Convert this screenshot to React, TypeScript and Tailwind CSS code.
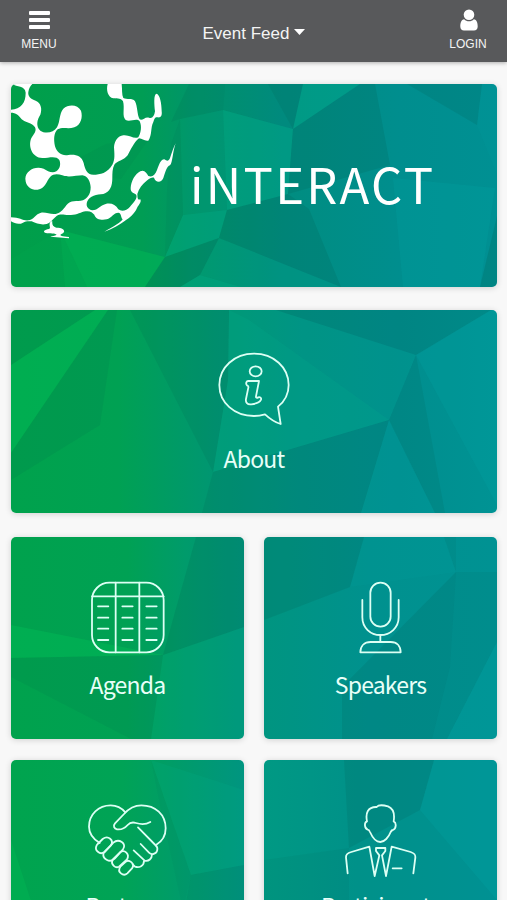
import React from "react";
import clsx from "clsx";

type Facet = {
  points: string;
  fill: string;
  opacity: number;
};

type Stop = [offset: string, color: string];

type Backdrop = {
  id: string;
  width: number;
  height: number;
  stops: Stop[];
  facets: Facet[];
};

type Tile = {
  label: string;
  icon: React.ReactNode;
  backdrop: Backdrop;
  labelClass?: string;
};

const DARK = "#00584c";
const TEAL = "#00a3a3";
const GREEN = "#00b956";
const MINT = "#00b48c";

const heroBackdrop: Backdrop = {
  id: "hero",
  width: 486,
  height: 203,
  stops: [
    ["0%", "#009f49"],
    ["27%", "#009d54"],
    ["37%", "#009569"],
    ["56%", "#008d80"],
    ["80%", "#008e8e"],
    ["100%", "#009093"],
  ],
  facets: [
    {points: "49,146 154,173 134,203 76,203", fill: GREEN, opacity: 0.5},
    {points: "49,146 76,203 54,203", fill: GREEN, opacity: 0.3},
    {points: "0,203 0,175 49,146 54,203", fill: GREEN, opacity: 0.12},
    {points: "66,75 95,60 140,52 110,95 80,92", fill: DARK, opacity: 0.06},
    {points: "156,106 160,60 169,35 172,131 154,173", fill: DARK, opacity: 0.07},
    {points: "178,0 214,0 212,26 169,35 160,38", fill: DARK, opacity: 0.12},
    {points: "214,0 257,0 282,45 212,26", fill: DARK, opacity: 0.04},
    {points: "257,0 292,0 282,45", fill: DARK, opacity: 0.18},
    {points: "292,0 349,0 282,45", fill: MINT, opacity: 0.35},
    {points: "212,26 282,45 277,110 216,126", fill: MINT, opacity: 0.33},
    {points: "169,35 212,26 216,126 172,131", fill: MINT, opacity: 0.1},
    {points: "172,131 216,126 208,154 154,173", fill: MINT, opacity: 0.32},
    {points: "154,173 208,154 189,191 169,203 134,203", fill: DARK, opacity: 0.16},
    {points: "189,191 169,203 230,203", fill: MINT, opacity: 0.35},
    {points: "208,154 330,203 230,203 189,191", fill: MINT, opacity: 0.15},
    {points: "216,126 277,110 298,125 330,203 208,154", fill: DARK, opacity: 0.16},
    {points: "282,45 349,0 364,0 379,81 277,110", fill: DARK, opacity: 0.17},
    {points: "396,0 471,0 466,41", fill: DARK, opacity: 0.15},
    {points: "471,0 486,0 486,90 466,41", fill: TEAL, opacity: 0.15},
    {points: "382,94 484,104 469,203 392,203", fill: TEAL, opacity: 0.28},
    {points: "486,132 486,203 469,203", fill: DARK, opacity: 0.2},
  ],
};

const aboutBackdrop: Backdrop = {
  id: "about",
  width: 486,
  height: 203,
  stops: [
    ["0%", "#00a24c"],
    ["22%", "#00a153"],
    ["42%", "#009672"],
    ["60%", "#009084"],
    ["80%", "#008e8e"],
    ["100%", "#009394"],
  ],
  facets: [
    {points: "0,0 84,0 0,55", fill: DARK, opacity: 0.09},
    {points: "84,0 97,0 0,143 0,55", fill: GREEN, opacity: 0.5},
    {points: "97,0 106,0 89,115 0,170 0,143", fill: DARK, opacity: 0.1},
    {points: "119,0 218,0 217,70 202,162", fill: DARK, opacity: 0.12},
    {points: "218,0 265,0 405,45 378,110 202,162 217,70", fill: MINT, opacity: 0.12},
    {points: "218,0 238,10 378,110 202,162 217,70", fill: MINT, opacity: 0.17},
    {points: "202,162 378,110 350,203 191,203", fill: DARK, opacity: 0.13},
    {points: "378,110 350,203 424,203", fill: TEAL, opacity: 0.22},
    {points: "378,110 405,45 434,203 424,203", fill: DARK, opacity: 0.12},
    {points: "265,0 480,0 405,45", fill: DARK, opacity: 0.15},
    {points: "480,0 486,0 486,195 405,45", fill: TEAL, opacity: 0.25},
  ],
};

const agendaBackdrop: Backdrop = {
  id: "agenda",
  width: 233,
  height: 202,
  stops: [
    ["0%", "#00a24d"],
    ["50%", "#00a154"],
    ["75%", "#009b6b"],
    ["100%", "#00947b"],
  ],
  facets: [
    {points: "0,88 152,118 0,121", fill: GREEN, opacity: 0.5},
    {points: "0,121 152,118 140,202 120,202 0,140", fill: DARK, opacity: 0.09},
    {points: "185,0 233,0 233,90 152,118", fill: DARK, opacity: 0.16},
    {points: "233,90 233,202 140,202 152,118", fill: MINT, opacity: 0.15},
  ],
};

const speakersBackdrop: Backdrop = {
  id: "speakers",
  width: 233,
  height: 202,
  stops: [
    ["0%", "#009580"],
    ["45%", "#00918e"],
    ["100%", "#009293"],
  ],
  facets: [
    {points: "0,0 100,0 86,50 0,83", fill: DARK, opacity: 0.17},
    {points: "100,0 180,0 192,35 86,50", fill: TEAL, opacity: 0.12},
    {points: "180,0 192,0 192,35", fill: DARK, opacity: 0.08},
    {points: "192,35 78,150 78,202 168,202 186,130", fill: DARK, opacity: 0.14},
    {points: "192,35 233,35 233,105 183,202 168,202 186,130", fill: DARK, opacity: 0.08},
    {points: "233,105 233,202 183,202", fill: TEAL, opacity: 0.28},
  ],
};

const partnersBackdrop: Backdrop = {
  id: "partners",
  width: 233,
  height: 202,
  stops: [
    ["0%", "#00a44e"],
    ["48%", "#00a356"],
    ["75%", "#009b6c"],
    ["100%", "#009580"],
  ],
  facets: [
    {points: "0,80 40,202 0,202", fill: GREEN, opacity: 0.4},
    {points: "140,0 233,30 233,105 180,115", fill: MINT, opacity: 0.18},
    {points: "140,0 180,115 172,150 150,50", fill: DARK, opacity: 0.04},
    {points: "180,115 233,105 233,202 172,160", fill: DARK, opacity: 0.09},
  ],
};

const participantsBackdrop: Backdrop = {
  id: "participants",
  width: 233,
  height: 202,
  stops: [
    ["0%", "#009983"],
    ["40%", "#009189"],
    ["100%", "#009193"],
  ],
  facets: [
    {points: "80,0 170,0 156,50 85,88", fill: DARK, opacity: 0.14},
    {points: "0,100 85,88 85,202 0,202", fill: DARK, opacity: 0.07},
    {points: "170,0 233,0 233,140 156,50", fill: TEAL, opacity: 0.3},
  ],
};

const FacetedBackdrop = ({id, width, height, stops, facets}: Backdrop) => (
  <svg
    className="absolute inset-0 h-full w-full"
    viewBox={`0 0 ${width} ${height}`}
    preserveAspectRatio="none"
    aria-hidden="true"
  >
    <defs>
      <linearGradient id={`${id}-base`} x1="0" y1="0" x2="1" y2="0">
        {stops.map(([offset, color]) => (
          <stop key={offset} offset={offset} stopColor={color} />
        ))}
      </linearGradient>
    </defs>
    <rect width={width} height={height} fill={`url(#${id}-base)`} />
    {facets.map((facet) => (
      <polygon
        key={facet.points}
        points={facet.points}
        fill={facet.fill}
        opacity={facet.opacity}
      />
    ))}
  </svg>
);

const GlobeMark = () => (
  <svg
    className="absolute left-0 top-0 h-[160px] w-[170px] fill-white"
    viewBox="18 18 510 480"
    aria-hidden="true"
  >
    <path d="M22 18C35 28 60 22 62 44C62 75 48 92 18 95L18 104C32 104 42 112 50 124C60 134 82 134 90 148C96 160 86 168 78 182C70 205 80 238 112 240C132 240 154 232 163 246C168 258 165 272 154 280C140 288 128 278 116 272C90 262 62 278 61 302C62 328 80 336 98 335C120 332 124 310 136 296C146 286 160 288 172 292C190 300 215 292 232 292C248 294 256 310 257 328C257 350 246 362 234 367C215 372 197 364 184 382C172 398 165 406 152 408C135 410 125 402 108 404C92 408 86 424 72 427C55 430 45 418 18 418L18 430C30 438 44 440 54 434C62 429 70 430 80 430C95 436 108 442 125 438C140 434 148 416 160 411C172 407 180 412 195 411C215 412 228 402 242 400C256 398 262 404 268 410C272 424 290 428 305 424C320 420 326 404 340 404C350 406 346 416 353 424C350 432 325 446 298 461C325 452 345 440 358 430C375 418 388 408 396 390C402 379 410 372 406 364C396 368 398 355 397 348C402 330 412 318 425 308C435 300 442 297 447 299C452 316 470 314 475 300C482 280 485 265 495 262C503 255 503 220 512 196C505 210 500 225 495 240C490 252 485 248 478 244C466 244 462 262 456 276C450 292 442 298 430 294C424 284 418 274 406 280C390 288 378 310 377 330C376 345 390 345 394 351C398 362 385 374 375 386C365 398 350 402 340 394C332 380 318 374 302 378C285 382 280 396 262 397C250 394 242 386 246 372C254 352 275 350 295 348C315 342 322 325 322 300C322 285 322 272 328 260C337 248 355 248 368 232C378 215 385 195 402 181C412 182 418 190 430 188C442 170 436 150 445 132C450 117 452 118 458 118C466 120 472 115 470 100C470 78 465 50 455 47C445 48 448 80 450 100C448 115 442 122 432 119C420 115 412 130 404 124C396 110 398 85 390 70C382 58 365 66 355 60C350 50 352 35 350 18L308 18C303 35 308 58 325 61C340 62 348 60 354 70C360 90 350 115 362 126C375 134 394 118 404 130C411 145 408 165 400 178C385 184 375 170 355 172C338 174 328 190 327 208C328 225 331 245 322 260C308 285 285 290 265 290C245 290 240 272 236 255C230 232 210 228 190 231C170 234 156 225 150 205C146 185 146 165 158 154C172 146 190 154 208 148C228 140 234 118 228 98C218 78 190 78 175 92C162 108 166 130 156 148C146 165 120 168 106 158C92 145 96 125 106 110C112 92 108 75 92 68C78 64 68 55 70 42C72 30 76 24 82 18Z" />
    <path d="M138 430C128 440 140 450 132 453C118 455 112 461 122 465C135 468 150 465 155 470C150 474 140 474 136 476L192 481L192 477C172 476 162 473 168 469C182 464 180 453 165 450C150 450 140 446 142 430Z" />
  </svg>
);

const LineIcon = ({
  viewBox,
  children,
}: {
  viewBox: string;
  children: React.ReactNode;
}) => (
  <svg
    className="h-[74px] w-[80px] fill-none stroke-[#dcfff4] stroke-[5.4]"
    viewBox={viewBox}
    strokeLinecap="round"
    strokeLinejoin="round"
    aria-hidden="true"
  >
    {children}
  </svg>
);

const AboutIcon = () => (
  <LineIcon viewBox="-108 156 240 222">
    <path d="M84 320C104 304 116 281 116 255C116 202 71 161 12 161S-92 202-92 255S-47 348 12 348C24 348 35 346 45 343C58 355 72 366 92 372Z" />
    <ellipse cx="17" cy="214" rx="18" ry="15" />
    <path d="M-6 243H27L18 289C17 294 21 294 25 292C30 290 35 294 33 299C29 308 14 312 4 313C-8 315-14 307-12 297L-5 263C-4 259-6 257-9 256C-13 252-12 244-6 243Z" />
  </LineIcon>
);

const AgendaIcon = () => (
  <LineIcon viewBox="264 153 240 222">
    <rect x="276" y="158" width="215" height="209" rx="52" />
    <path d="M276 199H491M347 158V367M418 158V367" />
    {[229, 263, 296, 330].map((y) => (
      <path key={y} d={`M294 ${y}H325M367 ${y}H398M439 ${y}H470`} />
    ))}
  </LineIcon>
);

const SpeakersIcon = () => (
  <LineIcon viewBox="261 153 240 222">
    <rect x="349" y="158" width="61" height="132" rx="30.5" />
    <path d="M325 210V262C325 293 349 315 379 315S434 293 434 262V210M379 315V336" />
    <path d="M319 367C319 348 331 336 350 336H410C429 336 440 348 440 367Z" />
  </LineIcon>
);

const PartnersIcon = () => (
  <LineIcon viewBox="264 162 240 222">
    <path d="M299 279C277 265 267 248 267 230C267 193 296 166 332 166C350 166 366 175 376 187" />
    <path d="M468 285C489 273 497 258 497 235C497 193 466 166 424 166C402 166 386 176 372 192L345 220C338 228 343 236 351 238C365 240 376 233 383 225C390 217 398 216 408 219C424 224 439 223 451 216" />
    <path d="M414 232L466 285C477 294 472 310 460 312C454 314 450 311 447 308L422 282" />
    <path d="M456 313C456 326 446 335 434 332L401 301M432 333C432 347 418 355 405 350L398 343" />
    <path d="M293 282L308 267C324 255 344 270 332 287L313 306C300 316 282 301 290 286Z" />
    <path d="M313 307L340 278C356 264 382 280 369 298L344 326C329 341 305 325 311 309" />
    <path d="M337 330L360 307C374 297 390 312 381 328L357 350C347 356 332 344 337 330Z" />
    <path d="M361 350L376 336C386 326 407 341 396 355L382 370C370 381 350 366 361 350Z" />
  </LineIcon>
);

const ParticipantsIcon = () => (
  <LineIcon viewBox="261 162 240 222">
    <path d="M339 214C334 190 341 170 368 171C374 163 391 166 402 169C420 176 422 195 419 214C428 218 427 236 417 240C413 240 412 242 410 246C404 262 391 276 379 276S355 262 348 246C346 241 344 239 341 239C331 235 330 217 339 214Z" />
    <path d="M281 370L276 322C275 313 282 309 292 306L346 290L362 378L376 316L366 303V294H394V303L384 316L396 378L413 290L470 306C482 310 485 314 484 323L478 370M416 355H443" />
  </LineIcon>
);

const tiles: Tile[] = [
  {label: "Agenda", icon: <AgendaIcon />, backdrop: agendaBackdrop},
  {label: "Speakers", icon: <SpeakersIcon />, backdrop: speakersBackdrop},
  {
    label: "Partners",
    icon: <PartnersIcon />,
    backdrop: partnersBackdrop,
    labelClass: "mt-[11px]",
  },
  {
    label: "Participants",
    icon: <ParticipantsIcon />,
    backdrop: participantsBackdrop,
    labelClass: "mt-[11px]",
  },
];

const cardClass =
  "relative overflow-hidden rounded-[5px] shadow-[0_1px_6px_rgba(0,0,0,0.16)]";

const FeedCard = ({
  label,
  icon,
  backdrop,
  labelClass = "mt-[13px]",
  wide,
}: Tile & {wide?: boolean}) => (
  <a
    href="#"
    className={clsx(
      cardClass,
      "block",
      wide ? "h-[203px] pt-[42px]" : "h-[202px] pt-11",
    )}
  >
    <FacetedBackdrop {...backdrop} />
    <div className="relative flex flex-col items-center">
      {icon}
      <span
        className={clsx(
          "text-[23px] leading-[32px] tracking-[-0.8px] text-[#e8fff8] font-['Noto_Sans_CJK_SC',sans-serif]",
          labelClass,
        )}
      >
        {label}
      </span>
    </div>
  </a>
);

const Header = () => (
  <header className="relative flex h-[62px] items-start justify-between bg-[#58595b] text-[#f4f4f4] shadow-[0_1px_4px_rgba(0,0,0,0.3)]">
    <button className="flex w-[78px] flex-col items-center pt-[11px]">
      <svg className="h-[18px] w-[21px] fill-white" viewBox="0 0 21 18">
        <rect y="0" width="21" height="4" rx="1" />
        <rect y="7" width="21" height="4" rx="1" />
        <rect y="14" width="21" height="4" rx="1" />
      </svg>
      <span className="mt-[7px] text-[12px] leading-[16px]">MENU</span>
    </button>
    <button className="flex items-center gap-[5px] pl-px pt-[21px] text-[17px] leading-[25px]">
      Event Feed
      <svg className="mb-[4px] h-[6px] w-[11px] fill-white" viewBox="0 0 11 6">
        <path d="M0 0H11L5.5 6Z" />
      </svg>
    </button>
    <button className="flex w-[78px] flex-col items-center pt-[9px]">
      <svg
        className="ml-[2px] h-[22px] w-[18px] fill-white"
        viewBox="0 0 18 22"
      >
        <circle cx="9" cy="5.8" r="5.3" />
        <path d="M4.2 10.2C1.2 10.5 0.3 14 0.3 17.5C0.3 20 1.8 21.5 4 21.5H14C16.2 21.5 17.7 20 17.7 17.5C17.7 14 16.8 10.5 13.8 10.2C12.5 11.6 10.9 12.2 9 12.2S5.5 11.6 4.2 10.2Z" />
      </svg>
      <span className="mt-[5px] text-[12px] leading-[16px]">LOGIN</span>
    </button>
  </header>
);

const App = () => {
  return (
    <div className="h-[900px] w-[507px] overflow-hidden bg-[#f8f8f8] font-['Liberation_Sans',sans-serif]">
      <Header />
      <main className="flex flex-col pl-[11px] pr-[10px] pt-[22px]">
        <section className={clsx(cardClass, "h-[203px]")}>
          <FacetedBackdrop {...heroBackdrop} />
          <GlobeMark />
          <h1 className="relative pl-[179px] pt-[63px] text-[49px] leading-[72px] tracking-[2.3px] text-white font-['Noto_Sans_CJK_SC',sans-serif]">
            iNTERACT
          </h1>
        </section>
        <div className="mt-[23px]">
          <FeedCard
            wide
            label="About"
            icon={<AboutIcon />}
            backdrop={aboutBackdrop}
            labelClass="mt-4"
          />
        </div>
        <div className="mt-6 grid grid-cols-2 gap-x-5 gap-y-[21px]">
          {tiles.map((tile) => (
            <FeedCard key={tile.label} {...tile} />
          ))}
        </div>
      </main>
    </div>
  );
};

export default App;
